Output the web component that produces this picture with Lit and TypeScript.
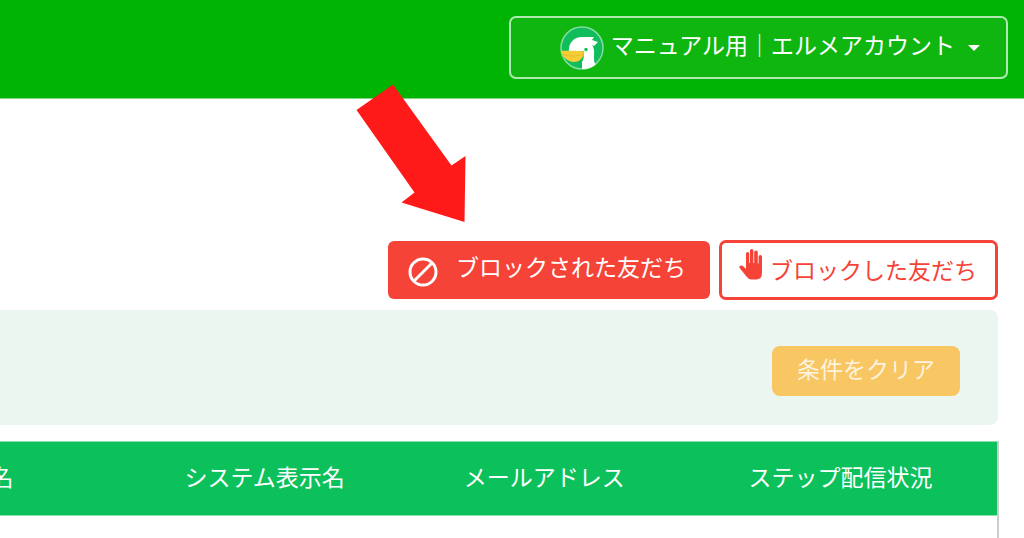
import { LitElement, html, css } from "lit";
import { customElement } from "lit/decorators.js";

@customElement("app-root")
export class AppRoot extends LitElement {
  static styles = css`
    :host {
      display: block;
      position: relative;
      min-height: 100vh;
      overflow: hidden;
      background: #fff;
      color: #fff;
      font-family: "Noto Sans CJK JP", sans-serif;
      font-size: 23px;
      line-height: 32px;
      font-weight: 400;
    }
    * {
      box-sizing: border-box;
    }
    button {
      font: inherit;
      color: inherit;
      margin: 0;
      cursor: pointer;
      white-space: nowrap;
    }
    svg {
      display: block;
      flex: none;
    }
    .header {
      display: flex;
      justify-content: flex-end;
      padding: 16px 16px 19px;
      background: #00b404;
      border-bottom: 1px solid #7fd982;
    }
    .account {
      display: flex;
      align-items: center;
      justify-content: flex-end;
      gap: 7px;
      width: 499px;
      height: 63px;
      padding: 0 26px 0 0;
      border: 2px solid #b0e8b1;
      border-radius: 7px;
      background: #0eb60f;
    }
    .account-name {
      padding-bottom: 8px;
    }
    .caret {
      margin-left: 6px;
    }
    .actions {
      display: flex;
      justify-content: flex-end;
      align-items: center;
      gap: 9px;
      padding: 141px 26px 10px 0;
    }
    .blocked-by {
      display: flex;
      align-items: center;
      gap: 18px;
      height: 58px;
      padding: 4px 24px 0 20px;
      border: 0;
      border-radius: 6px;
      background: #f64337;
    }
    .blocked-by span {
      padding-bottom: 12px;
    }
    .blocked {
      display: flex;
      align-items: center;
      gap: 7px;
      height: 60px;
      padding: 0 18px 0 17px;
      border: 3px solid #f64337;
      border-radius: 7px;
      background: #fff;
      color: #f64337;
    }
    .blocked svg {
      margin-bottom: 11px;
    }
    .blocked span {
      padding-bottom: 2px;
    }
    .filters {
      display: flex;
      justify-content: flex-end;
      margin-right: 26px;
      padding: 36px 38px 29px 0;
      background: #ecf6f1;
      border-radius: 0 8px 8px 0;
    }
    .clear {
      height: 50px;
      padding: 0 25px 6px;
      border: 0;
      border-radius: 8px;
      background: #f8c662;
      color: #fdf3df;
    }
    .table-view {
      margin: 16px 25px 0 0;
      overflow: hidden;
    }
    table {
      width: calc(100% + 121px);
      margin-left: -121px;
      table-layout: fixed;
      border-collapse: separate;
      border-spacing: 0;
      border-right: 2px solid #ccc;
    }
    th {
      height: 75px;
      padding: 0 0 6px;
      background: #0cc15b;
      border-top: 1px solid #8be0ae;
      border-bottom: 1px solid #8be0ae;
      font-weight: 400;
      text-align: center;
      white-space: nowrap;
    }
    td {
      height: 22px;
      padding: 0;
    }
    .col-name {
      width: 22%;
    }
    .col-system,
    .col-mail {
      width: 25%;
    }
    .arrow {
      position: absolute;
      top: 84px;
      right: 558px;
      pointer-events: none;
    }
  `;

  render() {
    return html`
      <header class="header">
        <button class="account" type="button" aria-haspopup="menu">
          <svg width="44" height="44" viewBox="0 0 44 44" aria-hidden="true">
            <circle cx="22" cy="22" r="21" fill="#0fbd5b" stroke="#83dca2" stroke-width="1.5" />
            <path fill="#fff" d="M9 26C8 17 14 11 22 11H34L32 14L38 16L34 20L32 19C35 23 34 28 34 33C34 36 35 38 36 38C32 42 27 43 22 43V36C24 33 24 29 24 25Z" />
            <path fill="#f5cd36" d="M1 24.500C8 25 16 24 24.500 25.500C24 31 20 36 14 36C8 36 2 31 1 24.500Z" />
            <path d="M3 28C9 31 18 31 24 27" fill="none" stroke="#e9b92a" stroke-width="1" />
            <circle cx="26" cy="23.500" r="1.700" fill="#0fbd5b" />
          </svg>
          <span class="account-name">マニュアル用｜エルメアカウント</span>
          <svg class="caret" width="12" height="6" viewBox="0 0 12 6" aria-hidden="true">
            <path d="M0 0H12L6 6Z" fill="#fff" />
          </svg>
        </button>
      </header>

      <main>
        <div class="actions">
          <button class="blocked-by" type="button">
            <svg width="30" height="30" viewBox="0 0 30 30" fill="none" stroke="#fff" stroke-width="3" aria-hidden="true">
              <circle cx="15" cy="15" r="13" />
              <path d="M6 24L24 6" />
            </svg>
            <span>ブロックされた友だち</span>
          </button>
          <button class="blocked" type="button">
            <svg width="24" height="31" viewBox="0 0 24 31" aria-hidden="true">
              <path
                fill="#f64337"
                d="M7 20V4.500Q7 3 8.600 3Q10.200 3 10.200 4.500V14H11V1.500Q11 0 12.700 0Q14.400 0 14.400 1.500V14H15.200V3Q15.200 1.500 17 1.500Q18.800 1.500 18.800 3V14.500H19.600V7.500Q19.600 6 21.300 6Q23 6 23 7.500V24Q23 30.500 17 30.500H12.500Q9.500 30.500 7.500 27.500L1 19.500Q-.5 17.500 1.200 16.700Q3 16 4.500 17.500Z"
              />
            </svg>
            <span>ブロックした友だち</span>
          </button>
        </div>

        <div class="filters">
          <button class="clear" type="button">条件をクリア</button>
        </div>

        <div class="table-view">
          <table>
            <thead>
              <tr>
                <th class="col-name" scope="col">名</th>
                <th class="col-system" scope="col">システム表示名</th>
                <th class="col-mail" scope="col">メールアドレス</th>
                <th scope="col">ステップ配信状況</th>
              </tr>
            </thead>
            <tbody>
              <tr>
                <td></td>
                <td></td>
                <td></td>
                <td></td>
              </tr>
            </tbody>
          </table>
        </div>
      </main>

      <svg class="arrow" width="110" height="139" viewBox="0 0 110 139" aria-hidden="true">
        <path d="M0.500 26L37 0.500L95.500 81.500L109.500 72L108.500 138L45.500 118.500L58.500 108.500Z" fill="#ff1a1a" />
      </svg>
    `;
  }
}
